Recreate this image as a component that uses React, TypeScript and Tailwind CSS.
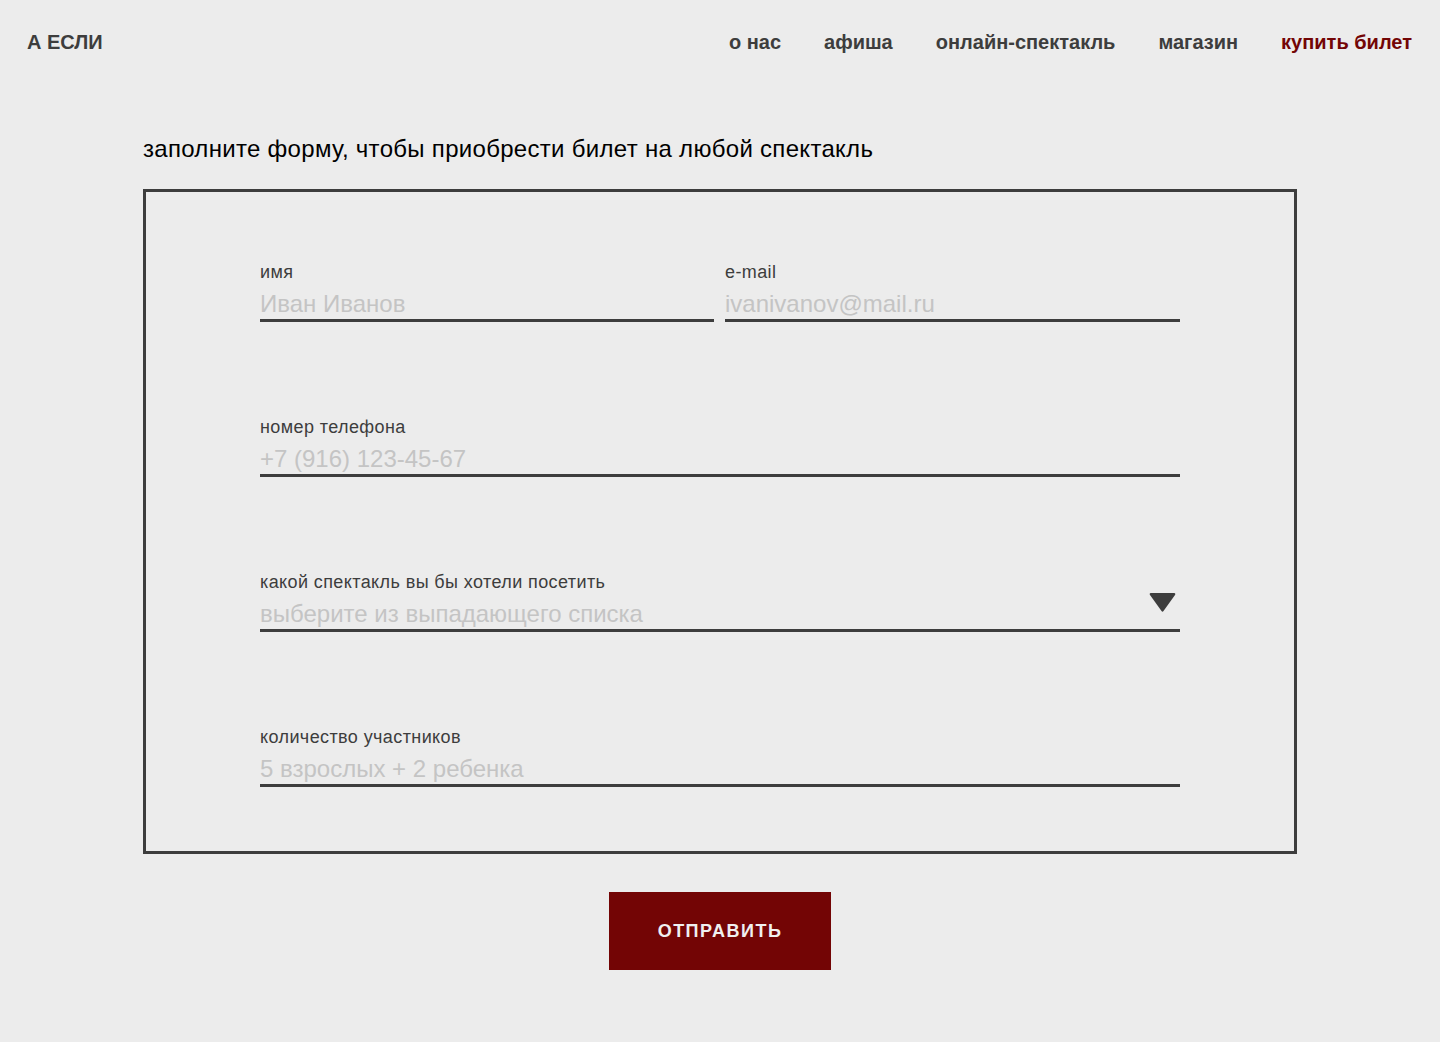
import React from "react";

const font = { fontFamily: '"Liberation Sans", Arial, sans-serif' };

function Field({ label, placeholder, className = "", arrow = false }: { label: string; placeholder: string; className?: string; arrow?: boolean }) {
  return (
    <div className={"flex flex-col " + className}>
      <div className="text-[18px] leading-[20px] tracking-[0.4px] text-[#3d3d3d]">{label}</div>
      <div className="relative mt-[9px] border-b-[3px] border-[#3d3d3d] pb-[2px]">
        <div className="text-[24px] leading-[26px] text-[#c4c4c4]">{placeholder}</div>
        {arrow && (
          <svg className="absolute right-[4px] bottom-[17px]" width="27" height="20" viewBox="0 0 27 20">
            <path d="M2 1 H25 Q27 1 26 3 L14.5 19 Q13.5 20.5 12.5 19 L1 3 Q0 1 2 1 Z" fill="#3d3d3d" />
          </svg>
        )}
      </div>
    </div>
  );
}

export default function App() {
  return (
    <div className="min-h-[1042px] w-full bg-[#ececec]" style={font}>
      <header className="flex h-[84px] items-center justify-between pl-[27px] pr-[28px]">
        <div className="text-[20px] font-bold leading-[24px] text-[#3d3d3d]">А ЕСЛИ</div>
        <nav className="flex gap-[43px] text-[20px] font-bold leading-[24px] text-[#3d3d3d]">
          <span>о нас</span>
          <span>афиша</span>
          <span>онлайн-спектакль</span>
          <span>магазин</span>
          <span className="text-[#730505]">купить билет</span>
        </nav>
      </header>
      <main className="mx-auto w-[1154px] pt-[51px]">
        <h1 className="text-[24px] leading-[28px] tracking-[0.3px] text-black">заполните форму, чтобы приобрести билет на любой спектакль</h1>
        <div className="mt-[26px] border-[3px] border-[#3d3d3d] pt-[70px] pb-[64px]">
          <div className="mx-auto flex w-[920px] flex-col gap-[95px]">
            <div className="flex gap-[11px]">
              <Field className="w-[454px]" label="имя" placeholder="Иван Иванов" />
              <Field className="flex-1" label="e-mail" placeholder="ivanivanov@mail.ru" />
            </div>
            <Field label="номер телефона" placeholder="+7 (916) 123-45-67" />
            <Field label="какой спектакль вы бы хотели посетить" placeholder="выберите из выпадающего списка" arrow />
            <Field label="количество участников" placeholder="5 взрослых + 2 ребенка" />
          </div>
        </div>
        <div className="mt-[38px] flex justify-center">
          <button className="h-[78px] w-[222px] bg-[#730505] text-[18px] font-bold tracking-[1.5px] text-[#f0f0f0]">ОТПРАВИТЬ</button>
        </div>
      </main>
    </div>
  );
}
